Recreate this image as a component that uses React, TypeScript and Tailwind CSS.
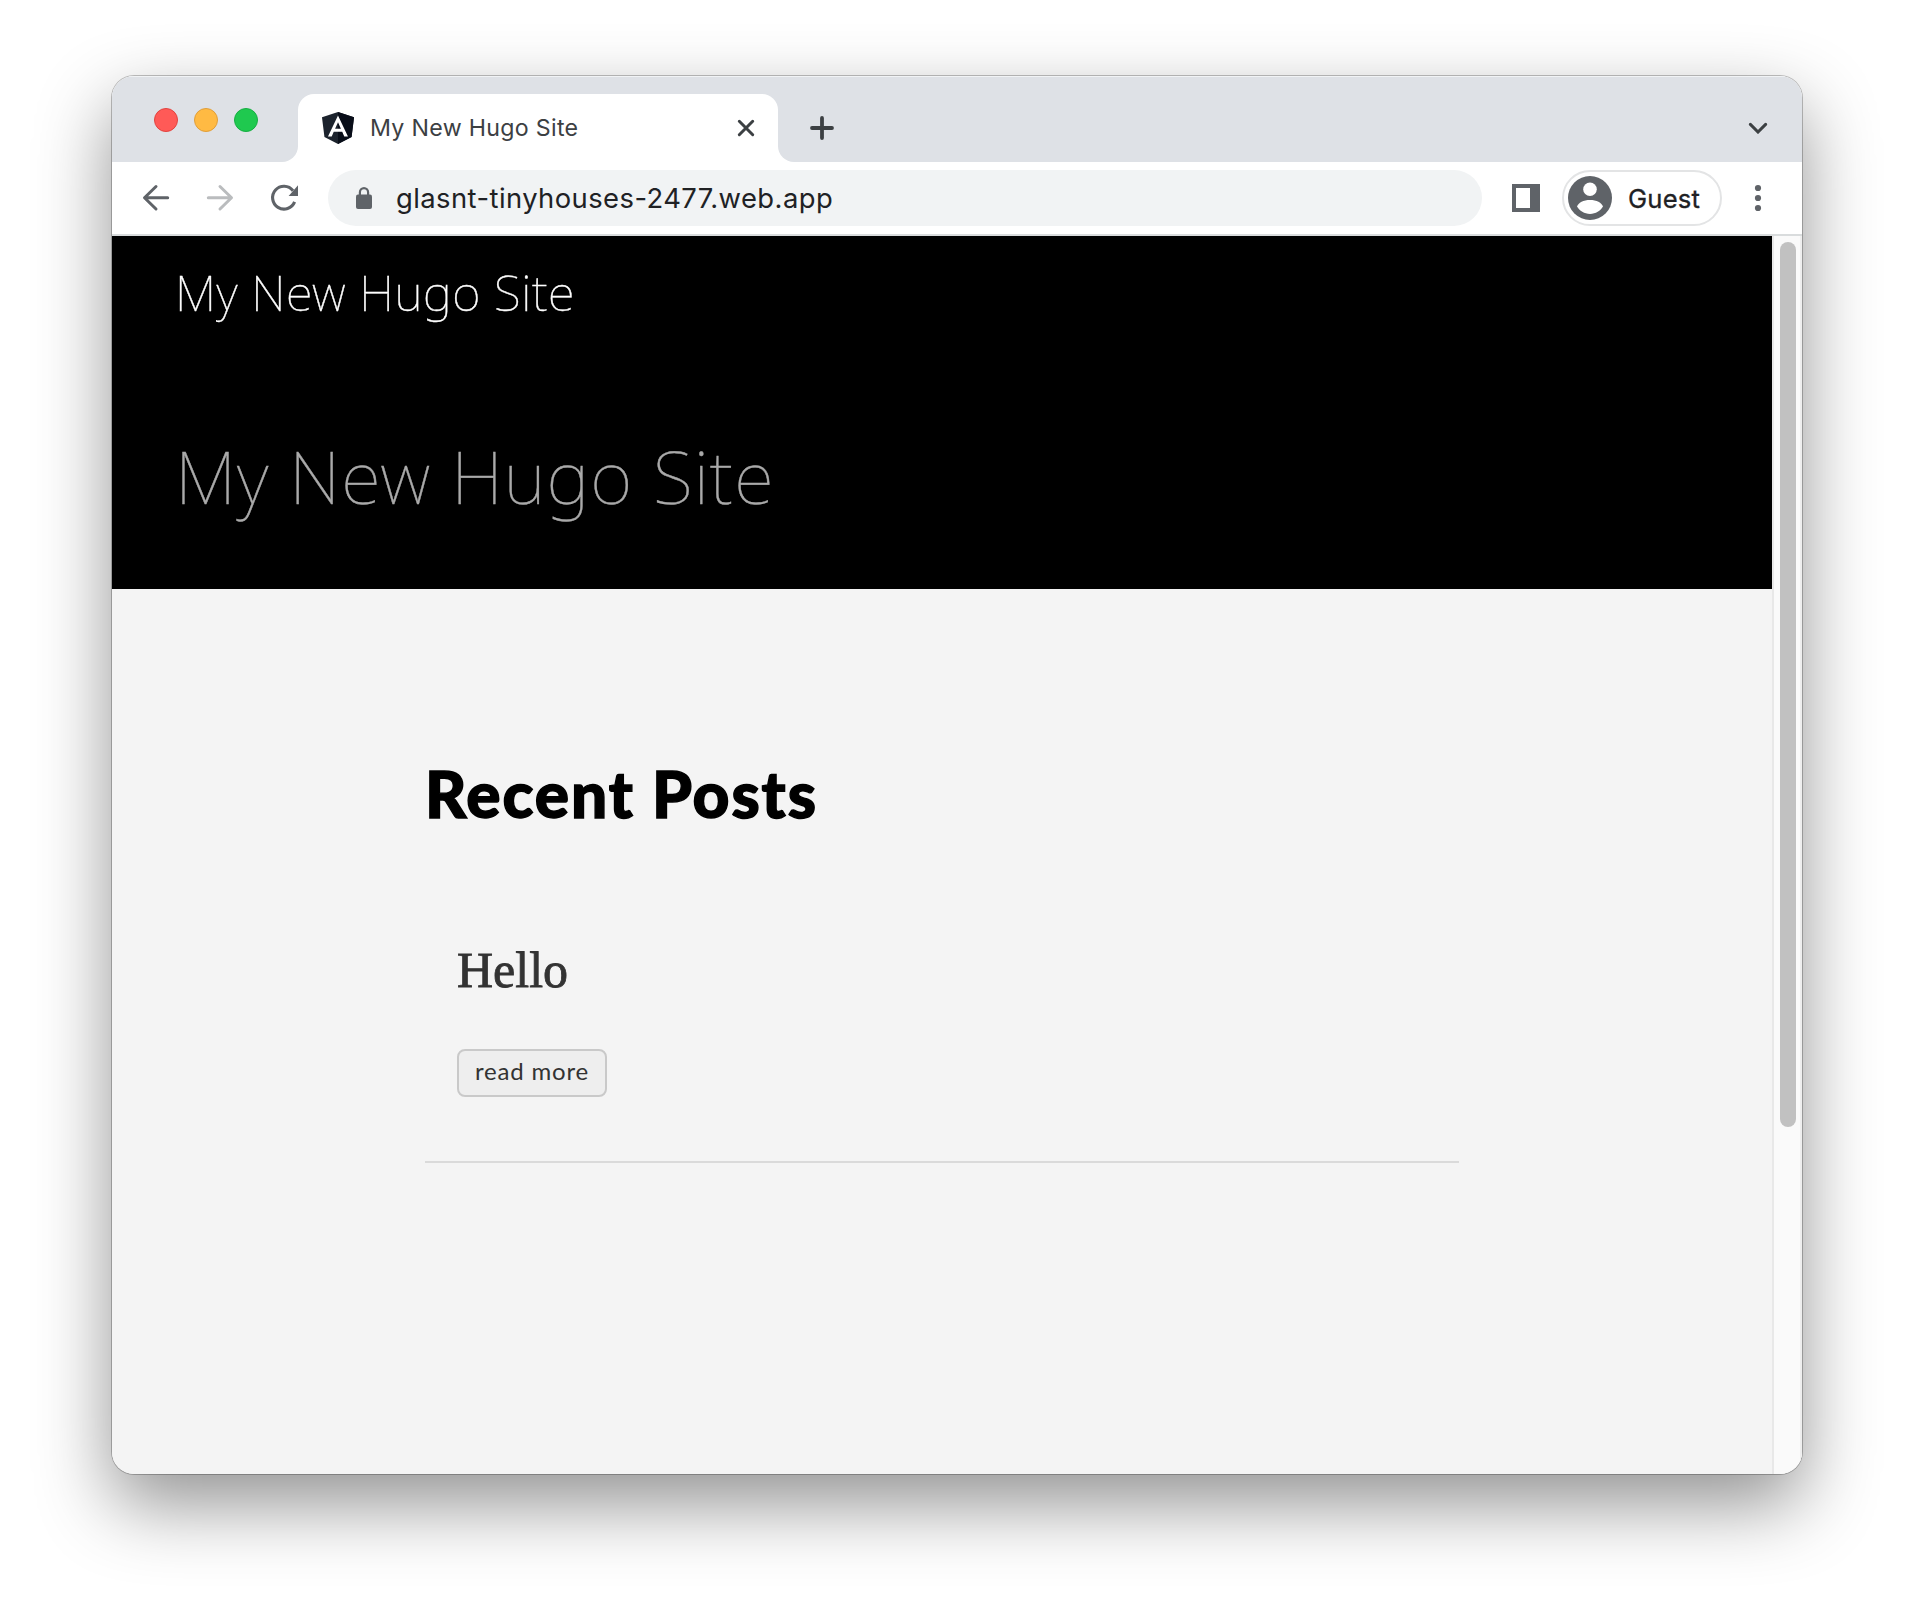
import React from "react";

function TrafficLights() {
  return (
    <div className="mt-[32px] ml-[42px] flex h-6 gap-4">
      <span className="size-6 rounded-full border border-[#e2433f] bg-[#ff5a57]" />
      <span className="size-6 rounded-full border border-[#e09e3a] bg-[#ffba43]" />
      <span className="size-6 rounded-full border border-[#17ae43] bg-[#1fc94f]" />
    </div>
  );
}

function SiteIcon() {
  return (
    <svg className="mt-[18px] ml-6 h-8 w-[32px] shrink-0" viewBox="31.9 30 186.2 200" preserveAspectRatio="none">
      <path fill="#1c232d" d="M125 30 31.9 63.2 46.1 186.3 125 230l78.9-43.7 14.2-123.1z" />
      <path fill="#080d18" d="M125 30v200l78.9-43.7 14.2-123.1z" />
      <path fill="#fff" d="M125 52.1 66.8 182.6h21.7l11.7-29.2h49.4l11.7 29.2H183L125 52.1zm17 83.3h-34l17-40.9z" />
    </svg>
  );
}

function TabStrip() {
  return (
    <div className="flex h-[86px] shrink-0 bg-[#dee1e6] shadow-[inset_0_1px_0_#f1f3f5]">
      <TrafficLights />
      <div className="mt-[18px] ml-[24px] flex">
        <div className="flex w-4 items-end bg-white">
          <div className="h-full w-full rounded-br-2xl bg-[#dee1e6]" />
        </div>
        <div className="flex h-[68px] w-[480px] rounded-t-2xl bg-white">
          <SiteIcon />
          <span className="mt-[22px] ml-4 w-[360px] font-['Inter'] text-[23.2px] leading-6 tracking-[0.3px] whitespace-nowrap text-[#3c4043]">
            My New Hugo Site
          </span>
          <svg className="mt-[25px] ml-[7px] size-[18px] shrink-0" viewBox="0 0 18 18" fill="none" stroke="#3c4043" strokeWidth="3" strokeLinecap="round">
            <path d="M2.3 2.3 15.7 15.7M15.7 2.3 2.3 15.7" />
          </svg>
        </div>
        <div className="w-4 bg-white">
          <div className="h-full w-full rounded-bl-2xl bg-[#dee1e6]" />
        </div>
      </div>
      <svg className="mt-10 ml-4 size-6" viewBox="0 0 24 24" fill="none" stroke="#3c4043" strokeWidth="3.8" strokeLinecap="round">
        <path d="M12 2v20M2 12h20" />
      </svg>
      <svg className="mt-[46px] mr-[34px] ml-auto h-3 w-5" viewBox="0 0 20 12" fill="none" stroke="#3c4043" strokeWidth="3" strokeLinecap="round">
        <path d="m2.4 2.4 7.6 7.6 7.6-7.6" />
      </svg>
    </div>
  );
}

function Toolbar() {
  return (
    <div className="flex h-[74px] shrink-0 items-start border-b-2 border-[#d9dcdd] bg-white">
      <svg className="mt-[22px] ml-[30px] size-7" viewBox="0 0 28 28" fill="none" stroke="#5f6368" strokeWidth="3" strokeLinecap="round" strokeLinejoin="round">
        <path d="M14 2.5 2.5 13.7 14 25M3 13.7h22.7" />
      </svg>
      <svg className="mt-[22px] ml-9 size-7" viewBox="0 0 28 28" fill="none" stroke="#babcbe" strokeWidth="3" strokeLinecap="round" strokeLinejoin="round">
        <path d="M14 2.5 25.5 13.7 14 25M25 13.7H2.3" />
      </svg>
      <svg className="mt-[22px] ml-9 size-7" viewBox="0 0 28 28">
        <path d="M24.6 17.9A11.4 11.4 0 1 1 23 6.7" fill="none" stroke="#5f6368" strokeWidth="3.1" />
        <path d="M28 1.2V12h-9.4z" fill="#5f6368" />
      </svg>
      <div className="mt-2 ml-[30px] flex h-14 w-[1154px] rounded-full bg-[#f1f3f4]">
        <svg className="mt-[17px] ml-7 h-[22px] w-4" viewBox="0 0 16 22">
          <path d="M3.9 9V5.2a4.1 4.1 0 0 1 8.2 0V9" fill="none" stroke="#5f6368" strokeWidth="2.2" />
          <rect y="7.6" width="16" height="14.4" rx="2" fill="#5f6368" />
        </svg>
        <span className="mt-[14px] ml-[24px] font-['Inter'] text-[27.4px] leading-7 tracking-[0.43px] whitespace-nowrap text-[#202124]">
          glasnt-tinyhouses-2477.web.app
        </span>
      </div>
      <svg className="mt-[22px] ml-[30px] size-7" viewBox="0 0 28 28">
        <path d="M0 0h28v28H0zM4 4v20h14V4z" fill="#5f6368" fillRule="evenodd" />
      </svg>
      <div className="mt-2 ml-[22px] flex h-14 w-[160px] rounded-full border-2 border-[#e3e4e5]">
        <svg className="mt-1 ml-1 size-11 shrink-0" viewBox="0 0 44 44">
          <circle cx="22" cy="22" r="22" fill="#5f6368" />
          <circle cx="22" cy="13.2" r="6.8" fill="#fff" />
          <path d="M9 30.6C10.2 26.6 15.6 24 22 24s11.8 2.6 13 6.6C32.5 35 27.7 38 22 38S11.5 35 9 30.6z" fill="#fff" />
        </svg>
        <span className="mt-[14px] ml-[16px] font-['Inter'] text-[25.6px] leading-[26px] tracking-[0.2px] text-[#202124] [-webkit-text-stroke:0.3px_#202124]">Guest</span>
      </div>
      <svg className="mt-[22px] ml-[32px] h-7 w-2" viewBox="0 0 8 28" fill="#5f6368">
        <circle cx="4" cy="4" r="3.1" />
        <circle cx="4" cy="14" r="3.1" />
        <circle cx="4" cy="24" r="3.1" />
      </svg>
    </div>
  );
}

function SiteHeader() {
  return (
    <header className="h-[353px] bg-black pl-[63px] font-['Noto_Sans'] whitespace-nowrap">
      <div className="pt-8 text-[49px] leading-[49px] font-thin tracking-[0.52px] text-white [-webkit-text-stroke:0.4px_#fff]">
        My New Hugo Site
      </div>
      <h1 className="mt-[122px] text-[73px] leading-[73px] font-thin tracking-[1px] text-[#aaaaaa] [-webkit-text-stroke:0.4px_#aaaaaa]">
        My New Hugo Site
      </h1>
    </header>
  );
}

function RecentPosts() {
  return (
    <section className="ml-[313px] flex w-[1034px] flex-col pt-[173px]">
      <h2 className="font-['Lato'] text-[64px] leading-[64px] font-black tracking-[1.9px] whitespace-nowrap text-black [-webkit-text-stroke:1.4px_#000]">Recent Posts</h2>
      <article className="mt-[119px] flex h-[218px] flex-col items-start border-b-2 border-[#dadada] pl-8">
        <h3 className="font-['Liberation_Serif'] text-[50px] leading-[50px] text-[#333333] [-webkit-text-stroke:0.8px_#333333]">Hello</h3>
        <a className="mt-[54px] flex h-12 w-[150px] items-center justify-center rounded-lg border-2 border-[#c9c9c9] bg-[#eeeeee] pb-1 font-['Lato'] text-[24px] leading-6 tracking-[0.8px] whitespace-nowrap text-[#333333]">
          read more
        </a>
      </article>
    </section>
  );
}

export default function App() {
  return (
    <div className="h-[1622px] w-[1914px] overflow-hidden bg-white pt-[76px] pl-[112px]">
      <div className="h-[1398px] w-[1690px] rounded-[22px] shadow-[0_0_0_1px_rgba(0,0,0,0.24),0_30px_74px_rgba(0,0,0,0.43)]">
        <div className="flex h-full flex-col overflow-hidden rounded-[22px] bg-[#f4f4f4]">
          <TabStrip />
          <Toolbar />
          <div className="flex min-h-0 flex-1">
            <main className="w-[1660px]">
              <SiteHeader />
              <RecentPosts />
            </main>
            <div className="w-[30px] border-x-2 border-l-[#e8e8e8] border-r-[#efefef] bg-[#fafafa] pt-[6px] pl-[6px]">
              <div className="h-[885px] w-4 rounded-full bg-[#c1c1c1]" />
            </div>
          </div>
        </div>
      </div>
    </div>
  );
}
